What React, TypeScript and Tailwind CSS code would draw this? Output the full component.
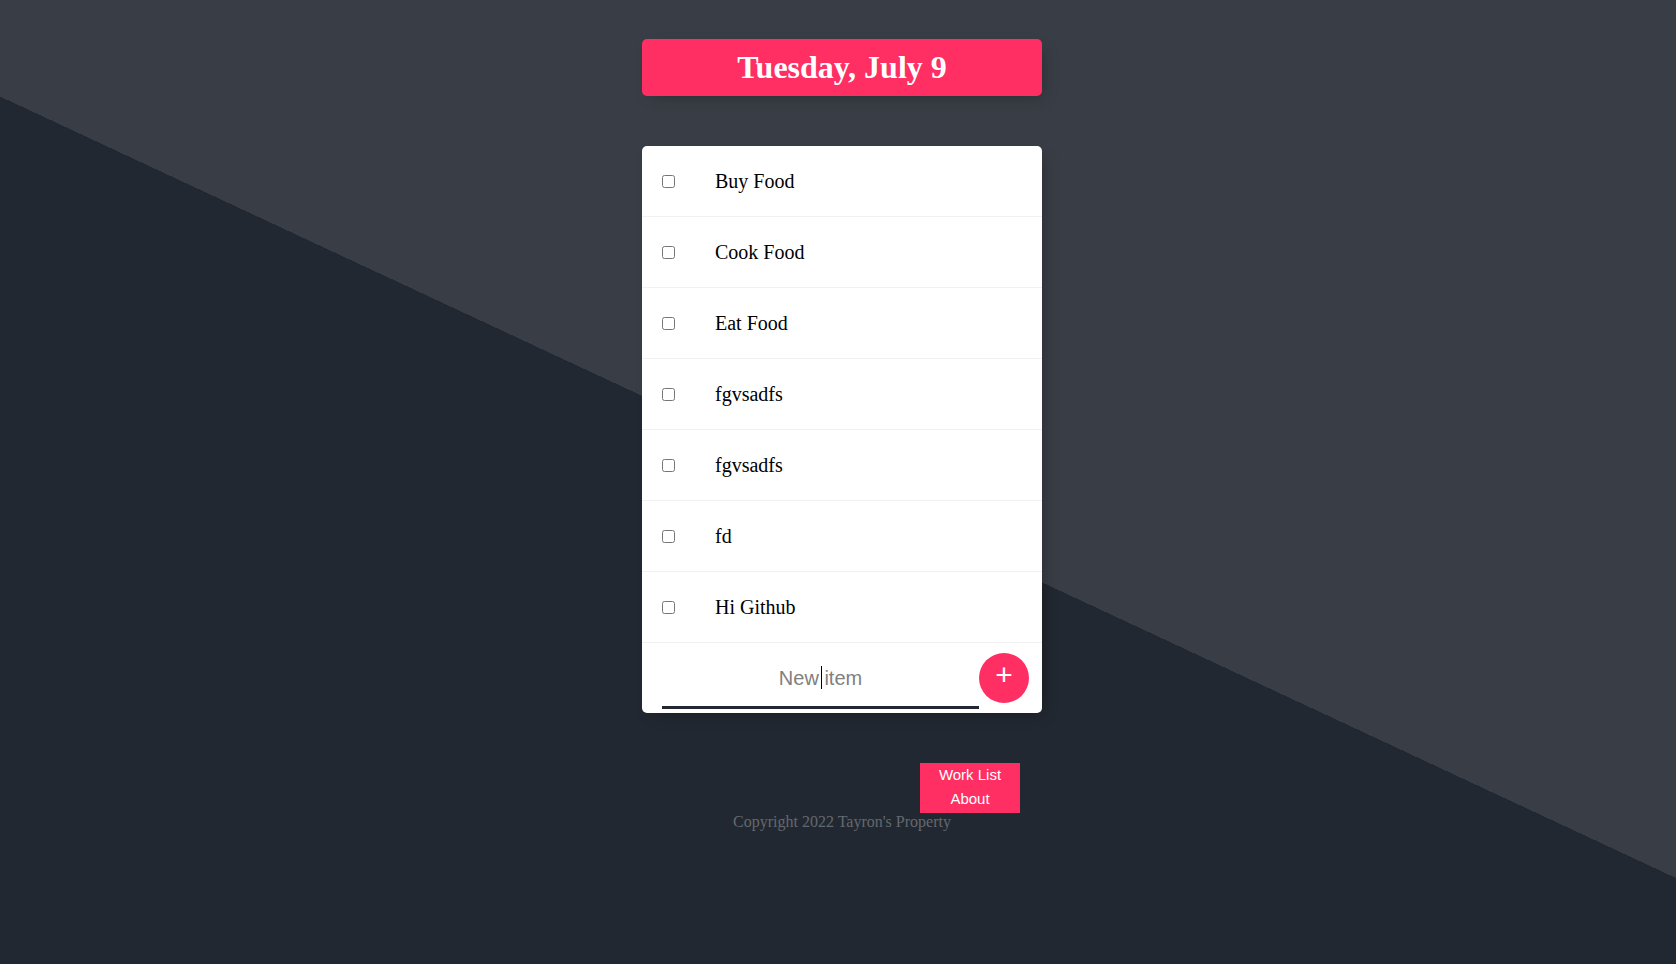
import React from "react";

const items = [
  "Buy Food",
  "Cook Food",
  "Eat Food",
  "fgvsadfs",
  "fgvsadfs",
  "fd",
  "Hi Github",
];

const App: React.FC = () => {
  return (
    <div className="min-h-screen h-[964px] w-full bg-[#393e46] bg-[linear-gradient(25deg,#222831_49.7%,#393e46_49.7%)] font-['Liberation_Serif',serif] pt-[39px] pl-[8px]">
      <div className="mx-auto w-[400px]">
        {/* heading */}
        <div className="rounded-[5px] bg-[#ff2e63] text-center shadow-[5px_5px_15px_-5px_rgba(0,0,0,0.3)]">
          <h1 className="py-[10px] text-[32px] leading-[37px] font-bold text-white">
            Tuesday, July 9
          </h1>
        </div>

        {/* list */}
        <div className="mt-[50px] rounded-[5px] bg-white shadow-[5px_5px_15px_-5px_rgba(0,0,0,0.3)]">
          {items.map((item, i) => (
            <div
              key={i}
              className="flex h-[71px] items-center border-b border-[#f1f1f1]"
            >
              <input
                type="checkbox"
                className="m-[20px] h-[13px] w-[13px] shrink-0"
              />
              <p className="p-[20px] text-[20px] font-extralight text-black">
                {item}
              </p>
            </div>
          ))}
          <form
            className="flex h-[70px] items-start pl-[20px]"
            onSubmit={(e) => e.preventDefault()}
          >
            <div className="relative mt-[4px] h-[62px] w-[317px]">
              <input
                type="text"
                placeholder="New item"
                className="h-full w-full px-[2px] text-center font-['Liberation_Sans',sans-serif] text-[20px] font-extralight text-black shadow-[inset_0_-3px_0_0_#222831] outline-none placeholder:text-[grey]"
              />
              <span className="pointer-events-none absolute left-[159px] top-[19px] h-[23px] w-px bg-black" />
            </div>
            <button
              type="submit"
              className="mt-[10px] flex h-[50px] w-[50px] items-center justify-center rounded-full bg-[#ff2e63] pb-[6px] font-['Liberation_Sans',sans-serif] text-[30px] leading-none text-white"
            >
              +
            </button>
          </form>
        </div>

        {/* footer */}
        <div className="mt-[50px] flex justify-end pr-[22px]">
          <div className="flex h-[50px] w-[100px] flex-col bg-[#ff2e63] pb-[2px] text-center font-['Liberation_Sans',sans-serif] text-[15px] text-white">
            <a className="h-[24px] leading-[24px]">Work List</a>
            <a className="h-[24px] leading-[24px]">About</a>
          </div>
        </div>
        <footer className="text-center text-[16px] leading-[18px] text-[#64686e]">
          Copyright 2022 Tayron's Property
        </footer>
      </div>
    </div>
  );
};

export default App;
